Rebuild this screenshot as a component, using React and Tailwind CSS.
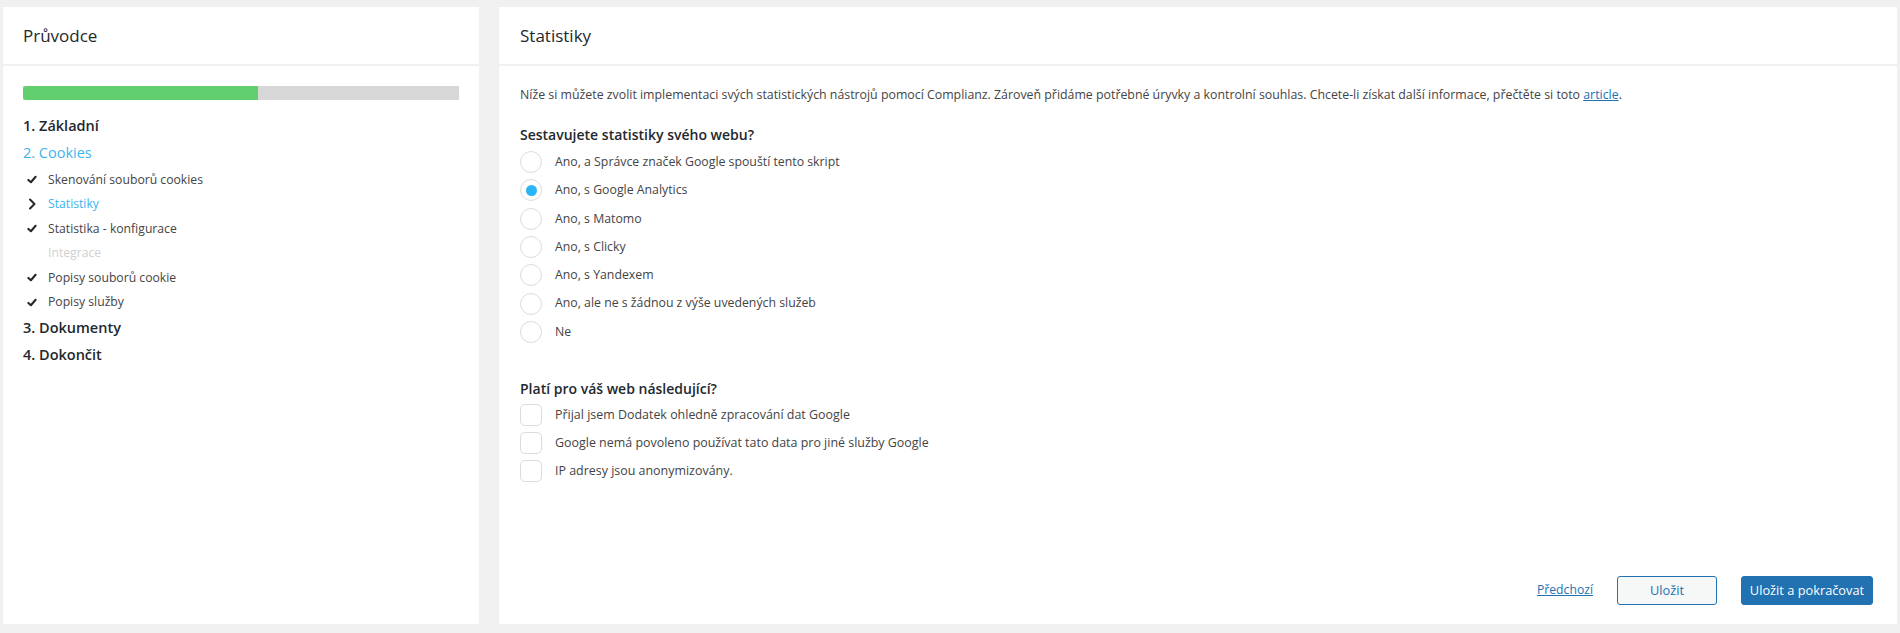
import React from "react";

function Check() {
  return (
    <svg width="10" height="9" viewBox="0 0 10 9" className="block">
      <path d="M1.4 4.9 L3.9 7.2 L8.6 1.8" fill="none" stroke="#23282d" strokeWidth="2.1" strokeLinecap="round" strokeLinejoin="round" />
    </svg>
  );
}

function Chevron() {
  return (
    <svg width="10" height="12" viewBox="0 0 10 12" className="block">
      <path d="M3 1.5 L7.5 6 L3 10.5" fill="none" stroke="#23282d" strokeWidth="2" strokeLinecap="round" strokeLinejoin="round" />
    </svg>
  );
}

function SubItem({ icon, label, cls }) {
  return (
    <div className="h-[24.5px] flex items-center">
      <div className="w-[25px] pl-[4px] flex items-center">{icon}</div>
      <span className={cls}>{label}</span>
    </div>
  );
}

function Radio({ label, checked }) {
  return (
    <div className="h-[28.3px] flex items-center">
      <div className="w-[22px] h-[22px] rounded-full border border-[#dcdcde] bg-white flex items-center justify-center shrink-0">
        {checked && <div className="w-[11px] h-[11px] rounded-full bg-[#29b6f6]" />}
      </div>
      <span className="ml-[13px] text-[12.3px] text-[#444]">{label}</span>
    </div>
  );
}

function Box({ label }) {
  return (
    <div className="h-[28px] flex items-center">
      <div className="w-[22px] h-[22px] rounded-[5px] border border-[#dcdcde] bg-white shrink-0" />
      <span className="ml-[13px] text-[12.45px] text-[#444]">{label}</span>
    </div>
  );
}

export default function App() {
  return (
    <div className="h-[633px] w-[1900px] bg-[#f0f0f1] flex gap-[20px] pl-[3px] pr-[3px] pt-[7px] pb-[9px] font-['Open_Sans',sans-serif] overflow-hidden">
      <div className="w-[476px] shrink-0 flex flex-col">
        <div className="bg-white h-[57px] flex items-center px-[20px] text-[17px] text-[#23282d]">Průvodce</div>
        <div className="h-[2px]" />
        <div className="bg-white flex-1 px-[20px] pt-[20px]">
          <div className="h-[14px] bg-[#d7d7d7]">
            <div className="h-full w-[235px] bg-[#61ce70] rounded-l-[3px]" />
          </div>
          <div className="mt-[12.5px]">
            <div className="h-[27px] flex items-center text-[14.5px] font-semibold text-[#23282d]">1. Základní</div>
            <div className="h-[27px] flex items-center text-[14.5px] text-[#3cb4ef]">2. Cookies</div>
            <div className="pt-[1px] text-[12.2px]">
              <SubItem icon={<Check />} label="Skenování souborů cookies" cls="text-[#444]" />
              <SubItem icon={<Chevron />} label="Statistiky" cls="text-[#3cb4ef]" />
              <SubItem icon={<Check />} label="Statistika - konfigurace" cls="text-[#444]" />
              <SubItem icon={null} label="Integrace" cls="text-[#d0d0d0]" />
              <SubItem icon={<Check />} label="Popisy souborů cookie" cls="text-[#444]" />
              <SubItem icon={<Check />} label="Popisy služby" cls="text-[#444]" />
            </div>
            <div className="h-[27px] flex items-center text-[14.5px] font-semibold text-[#23282d]">3. Dokumenty</div>
            <div className="h-[27px] flex items-center text-[14.5px] font-semibold text-[#23282d]">4. Dokončit</div>
          </div>
        </div>
      </div>

      <div className="flex-1 flex flex-col">
        <div className="bg-white h-[57px] flex items-center px-[21px] text-[17px] text-[#23282d]">Statistiky</div>
        <div className="h-[2px]" />
        <div className="bg-white flex-1 flex flex-col pl-[21px] pr-[24px] pt-[19px] pb-[19px]">
          <div className="h-[20px] flex items-center text-[12.35px] text-[#444]">
            <span>
              Níže si můžete zvolit implementaci svých statistických nástrojů pomocí Complianz. Zároveň přidáme potřebné úryvky a kontrolní souhlas. Chcete-li získat další informace, přečtěte si toto{" "}
              <a className="text-[#2271b1] underline">article</a>.
            </span>
          </div>
          <div className="mt-[17px] h-[24px] flex items-center text-[14px] font-semibold text-[#23282d]">Sestavujete statistiky svého webu?</div>
          <div className="mt-[2px]">
            <Radio label="Ano, a Správce značek Google spouští tento skript" />
            <Radio label="Ano, s Google Analytics" checked />
            <Radio label="Ano, s Matomo" />
            <Radio label="Ano, s Clicky" />
            <Radio label="Ano, s Yandexem" />
            <Radio label="Ano, ale ne s žádnou z výše uvedených služeb" />
            <Radio label="Ne" />
          </div>
          <div className="mt-[30px] h-[24px] flex items-center text-[14px] font-semibold text-[#23282d]">Platí pro váš web následující?</div>
          <div className="mt-[1px]">
            <Box label="Přijal jsem Dodatek ohledně zpracování dat Google" />
            <Box label="Google nemá povoleno používat tato data pro jiné služby Google" />
            <Box label="IP adresy jsou anonymizovány." />
          </div>
          <div className="mt-auto flex items-center justify-end gap-[24px]">
            <a className="text-[12.2px] text-[#2271b1] underline">Předchozí</a>
            <button className="w-[100px] h-[29px] rounded-[3px] border border-[#2271b1] bg-[#f6f7f7] text-[12.8px] text-[#2271b1]">Uložit</button>
            <button className="w-[132px] h-[29px] rounded-[3px] border border-[#2271b1] bg-[#2271b1] text-[12.8px] text-white">Uložit a pokračovat</button>
          </div>
        </div>
      </div>
    </div>
  );
}
